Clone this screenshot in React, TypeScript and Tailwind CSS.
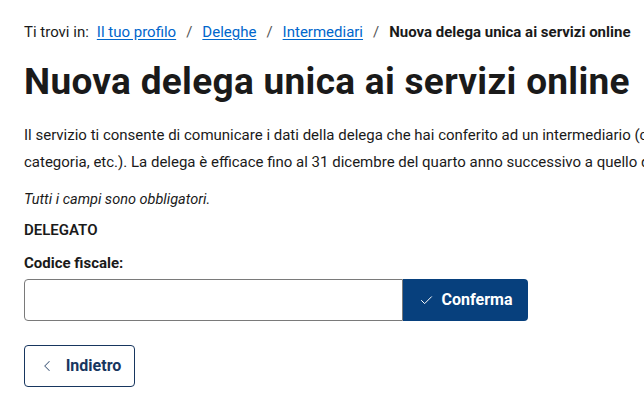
import { Check, ChevronLeft } from "lucide-react";

export default function App() {
  return (
    <div
      className="w-[644px] h-[410px] overflow-hidden bg-white text-[#1a1a1a]"
      style={{ fontFamily: 'Roboto, "Noto Sans", sans-serif' }}
    >
      <div className="pl-6 pt-[22px] w-[900px]">
        {/* breadcrumb */}
        <nav className="flex items-center text-[15px] leading-5 whitespace-nowrap">
          <span>Ti trovi in:</span>
          <a href="#" className="ml-2 text-[#0066cc] underline underline-offset-2">
            Il tuo profilo
          </a>
          <span className="mx-2.5 text-[#555]">/</span>
          <a href="#" className="text-[#0066cc] underline underline-offset-2">
            Deleghe
          </a>
          <span className="mx-2.5 text-[#555]">/</span>
          <a href="#" className="text-[#0066cc] underline underline-offset-2">
            Intermediari
          </a>
          <span className="mx-2.5 text-[#555]">/</span>
          <span className="font-bold">Nuova delega unica ai servizi online</span>
        </nav>

        <h1 className="mt-[16px] text-[37px] leading-[48px] font-bold tracking-[0.3px] whitespace-nowrap">
          Nuova delega unica ai servizi online
        </h1>

        {/* lines run past the right edge, as in the page */}
        <p className="mt-[16px] text-[15px] leading-[27px] whitespace-nowrap">
          Il servizio ti consente di comunicare i dati della delega che hai conferito ad un intermediario (commercialista, CAF, associazione di
          <br />
          categoria, etc.). La delega è efficace fino al 31 dicembre del quarto anno successivo a quello di conferimento.
        </p>

        <p className="mt-[12px] text-[14.5px] leading-6 italic">Tutti i campi sono obbligatori.</p>

        <h2 className="mt-[6px] text-[15px] leading-6 font-semibold">DELEGATO</h2>

        <form className="mt-[9px]">
          <label className="block text-[15px] leading-6 font-bold">Codice fiscale:</label>
          <div className="mt-[4px] flex w-[504px]">
            <input
              type="text"
              className="h-[42px] w-[379px] rounded-l-[4px] border border-[#7a7a7a] px-3 text-[16px] outline-none"
            />
            <button
              type="button"
              className="flex h-[42px] w-[125px] items-center justify-center gap-2 rounded-r-[4px] bg-[#07407d] text-[16px] font-bold text-white"
            >
              <Check size={15} strokeWidth={1.6} />
              Conferma
            </button>
          </div>

          <button
            type="button"
            className="mt-[24px] flex h-[42px] w-[111px] items-center justify-center gap-2.5 rounded-[4px] border border-[#17365f] text-[16px] font-bold text-[#17365f]"
          >
            <ChevronLeft size={18} strokeWidth={1.4} className="text-[#4a6180]" />
            Indietro
          </button>
        </form>
      </div>
    </div>
  );
}
